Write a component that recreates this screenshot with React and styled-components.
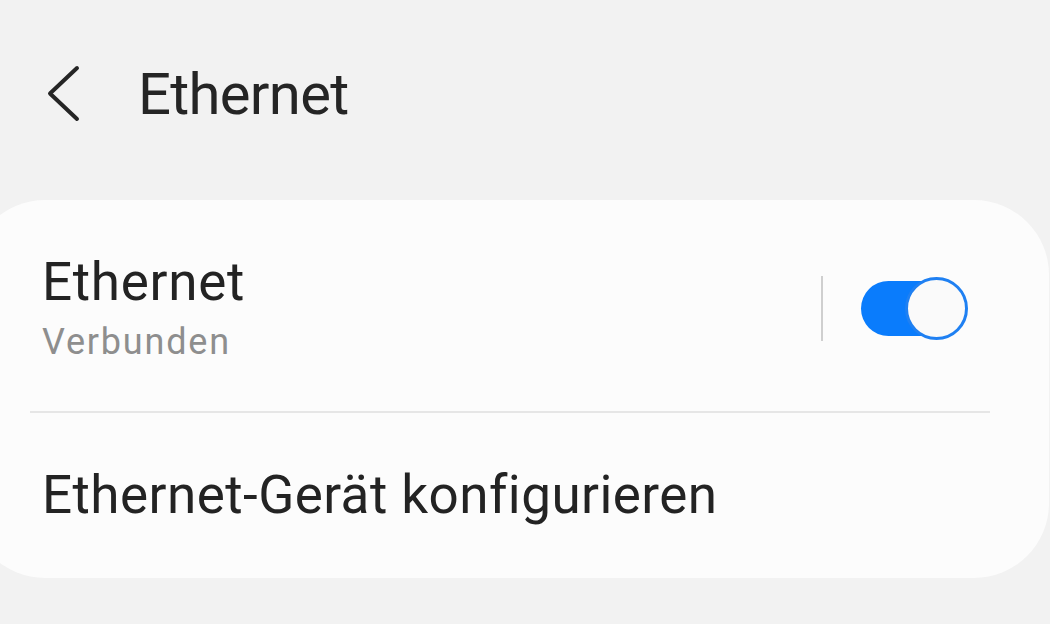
import React from "react";
import styled, { createGlobalStyle } from "styled-components";

const Global = createGlobalStyle`
  html, body { margin: 0; padding: 0; background: #f2f2f2; }
  body { font-family: Roboto, "Noto Sans", sans-serif; overflow: hidden; }
  #root { width: 1050px; height: 624px; overflow: hidden; }
`;

const Page = styled.div`
  width: 1050px;
  height: 624px;
  background: #f2f2f2;
  display: flex;
  flex-direction: column;
`;

const Header = styled.header`
  display: flex;
  align-items: center;
  height: 128px;
  padding-top: 30px;
  padding-left: 44px;
  gap: 57px;
`;

const BackButton = styled.button`
  border: 0;
  background: none;
  padding: 0;
  width: 37px;
  height: 58px;
  display: flex;
  align-items: center;
  justify-content: center;
  cursor: pointer;
`;

const HeaderTitle = styled.h1`
  margin: 0;
  font-size: 58px;
  line-height: 1;
  font-weight: 400;
  color: #252525;
  letter-spacing: -0.7px;
`;

const Card = styled.section`
  margin-top: 42px;
  margin-left: -30px;
  width: 1079px;
  background: #fcfcfc;
  border-radius: 75px;
  display: flex;
  flex-direction: column;
`;

const Row = styled.div`
  display: flex;
  align-items: center;
  padding: ${(p) => p.$top} 81px ${(p) => p.$bottom} 72px;
`;

const TextBlock = styled.div`
  flex: 1;
  display: flex;
  flex-direction: column;
  gap: 15px;
`;

const Title = styled.div`
  font-size: 53px;
  line-height: 1;
  color: #232323;
  letter-spacing: ${(p) => p.$spacing || "0.7px"};
`;

const Subtitle = styled.div`
  font-size: 36px;
  line-height: 1;
  color: #8e8e8e;
  letter-spacing: 1.8px;
`;

const Separator = styled.div`
  width: 2px;
  height: 65px;
  background: #cfcfcf;
  margin-right: 38px;
`;

const Switch = styled.div`
  position: relative;
  width: 107px;
  height: 65px;
`;

const Track = styled.div`
  position: absolute;
  left: 0;
  top: 5px;
  width: 96px;
  height: 55px;
  border-radius: 28px;
  background: #0a7cfc;
`;

const Thumb = styled.div`
  position: absolute;
  right: 0;
  top: 1px;
  width: 57px;
  height: 57px;
  border-radius: 50%;
  background: #fafafa;
  border: 3px solid #1f80f2;
`;

const Divider = styled.div`
  height: 2px;
  background: #e6e6e6;
  margin: 0 59px 0 60px;
`;

export default function App() {
  return (
    <>
      <Global />
      <Page>
        <Header>
          <BackButton aria-label="Zurück">
            <svg width="37" height="58" viewBox="0 0 37 58" fill="none">
              <path
                d="M33 3 L6 28.5 L33 54"
                stroke="#252525"
                strokeWidth="4"
                strokeLinecap="round"
                strokeLinejoin="round"
              />
            </svg>
          </BackButton>
          <HeaderTitle>Ethernet</HeaderTitle>
        </Header>
        <Card>
          <Row $top="56px" $bottom="51px">
            <TextBlock>
              <Title>Ethernet</Title>
              <Subtitle>Verbunden</Subtitle>
            </TextBlock>
            <Separator />
            <Switch>
              <Track />
              <Thumb />
            </Switch>
          </Row>
          <Divider />
          <Row $top="56px" $bottom="56px">
            <TextBlock>
              <Title $spacing="0.45px">Ethernet-Gerät konfigurieren</Title>
            </TextBlock>
          </Row>
        </Card>
      </Page>
    </>
  );
}
